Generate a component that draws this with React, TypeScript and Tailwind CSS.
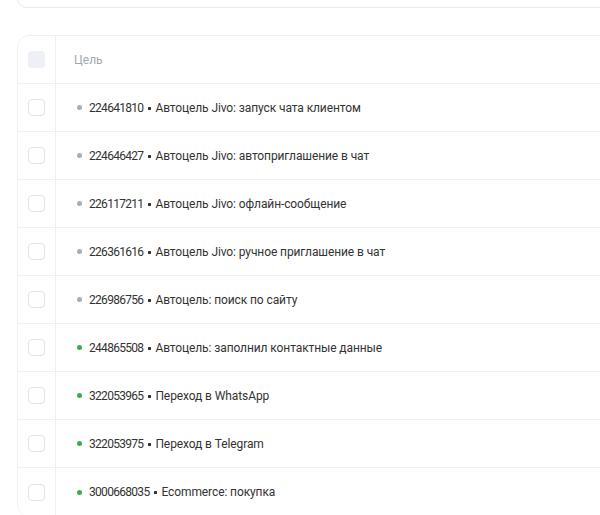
const goals = [
  { id: "224641810", name: "Автоцель Jivo: запуск чата клиентом", active: false },
  { id: "224646427", name: "Автоцель Jivo: автоприглашение в чат", active: false },
  { id: "226117211", name: "Автоцель Jivo: офлайн-сообщение", active: false },
  { id: "226361616", name: "Автоцель Jivo: ручное приглашение в чат", active: false },
  { id: "226986756", name: "Автоцель: поиск по сайту", active: false },
  { id: "244865508", name: "Автоцель: заполнил контактные данные", active: true },
  { id: "322053965", name: "Переход в WhatsApp", active: true },
  { id: "322053975", name: "Переход в Telegram", active: true },
  { id: "3000668035", name: "Ecommerce: покупка", active: true },
];

export default function App() {
  return (
    <div
      className="w-[600px] h-[515px] overflow-hidden bg-white"
      style={{ fontFamily: "Roboto, 'Noto Sans', sans-serif" }}
    >
      <div className="pl-[17px]">
        {/* Top card (cut off) */}
        <div className="-mt-[20px] h-[28px] w-[700px] rounded-[10px] border border-[#ebebeb] bg-white"></div>

        {/* Goals table */}
        <div className="mt-[27px] w-[700px] rounded-[12px] border border-[#f0f1f5] bg-white">
          <div className="flex h-[48px] border-b border-[#eef0f5]">
            <div className="flex w-[38px] items-center justify-center border-r border-[#eef0f5]">
              <div className="h-[17px] w-[17px] rounded-[4px] bg-[#eef0f6]"></div>
            </div>
            <div className="flex items-center pl-[18px] text-[12px] text-[#a3a7b3]">Цель</div>
          </div>

          {goals.map((goal, idx) => (
            <div
              key={goal.id}
              className={`flex h-[48px] ${idx < goals.length - 1 ? "border-b border-[#eef0f5]" : ""}`}
            >
              <div className="flex w-[38px] items-center justify-center border-r border-[#eef0f5]">
                <div className="h-[17px] w-[17px] rounded-[4px] border border-[#e2e2ee] bg-white"></div>
              </div>
              <div className="flex items-center pl-[21px] text-[12px] text-[#333333]">
                <span
                  className={`mr-[7px] h-[5px] w-[5px] rounded-full ${
                    goal.active ? "bg-[#2fb344]" : "bg-[#a9adb8]"
                  }`}
                ></span>
                <span className="tracking-[-0.7px]">{goal.id}</span>
                <span className="ml-[5px] mr-[4px] mt-[1px] h-[3px] w-[3px] rounded-[0.5px] bg-[#333333]"></span>
                <span className="tracking-[-0.1px]">{goal.name}</span>
              </div>
            </div>
          ))}
        </div>
      </div>
    </div>
  );
}
